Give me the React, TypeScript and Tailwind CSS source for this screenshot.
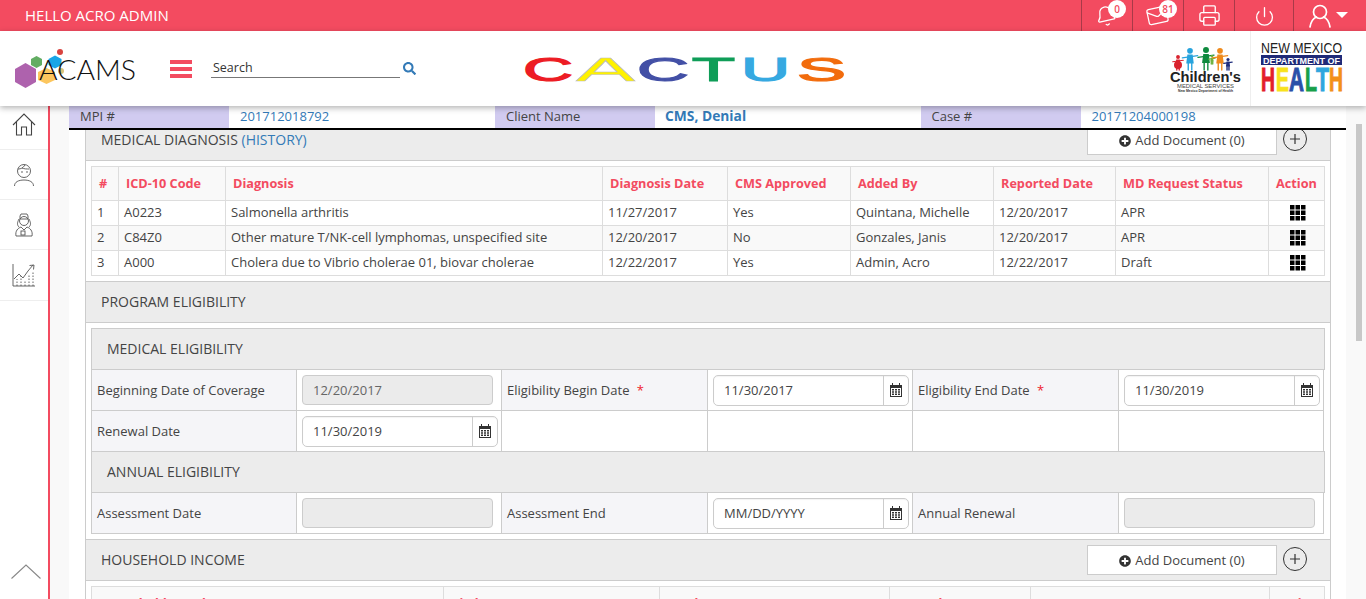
import { Bell, Mail, Printer, Power } from 'lucide-react'
import { FaSearch, FaPlusCircle } from 'react-icons/fa'

const MPI_CELLS = [
  { label: 'MPI #', value: '201712018792', w: 'w-[426px]' },
  { label: 'Client Name', value: 'CMS, Denial', bold: true, w: 'w-[425.5px]' },
  { label: 'Case #', value: '20171204000198', w: 'flex-1' },
]

const DIAGNOSIS_COLS = [
  { name: '#', w: 'w-[27px]' },
  { name: 'ICD-10 Code', w: 'w-[107px]' },
  { name: 'Diagnosis', w: 'w-[377px]' },
  { name: 'Diagnosis Date', w: 'w-[125px]' },
  { name: 'CMS Approved', w: 'w-[123px]' },
  { name: 'Added By', w: 'w-[143px]' },
  { name: 'Reported Date', w: 'w-[122px]' },
  { name: 'MD Request Status', w: 'w-[153px]' },
  { name: 'Action', w: 'w-[56px]' },
]

const DIAGNOSES = [
  ['1', 'A0223', 'Salmonella arthritis', '11/27/2017', 'Yes', 'Quintana, Michelle', '12/20/2017', 'APR'],
  ['2', 'C84Z0', 'Other mature T/NK-cell lymphomas, unspecified site', '12/20/2017', 'No', 'Gonzales, Janis', '12/20/2017', 'APR'],
  ['3', 'A000', 'Cholera due to Vibrio cholerae 01, biovar cholerae', '12/22/2017', 'Yes', 'Admin, Acro', '12/22/2017', 'Draft'],
]

const INCOME_COLS = [
  { name: 'Household Member Name', w: 'w-[352px]' },
  { name: 'Birth Date', w: 'w-[216px]' },
  { name: 'Employer Type', w: 'w-[230px]' },
  { name: 'Annual Income', w: 'w-[141px]' },
  { name: 'Income Frequency', w: 'w-[239px]' },
  { name: 'Action', w: 'w-[55px]' },
]

function AcamsLogo() {
  return (
    <svg width="124" height="50" viewBox="0 0 124 50">
      <polygon points="11.5,21 22,27 22,40 11.5,46 1,40 1,27" fill="#ae62ad" />
      <polygon points="22.5,14 28,17 28,23 22.5,26 17,23 17,17" fill="#63ad63" />
      <polygon points="41,13.5 47.5,17 47.5,23 41,26.5 34.5,23 34.5,17" fill="#19a5e6" />
      <polygon points="32.5,26 41,30 41,38 32.5,42 24,38 24,30" fill="#fcc65e" />
      <circle cx="46" cy="10" r="3" fill="#d8433f" />
      <circle cx="47" cy="29" r="3" fill="#d9c27a" />
      <text x="25" y="38" fontFamily="Lato, 'Liberation Sans', sans-serif" fontWeight="300" fontSize="28" fill="#111" textLength="97" lengthAdjust="spacingAndGlyphs">ACAMS</text>
    </svg>
  )
}

function CactusLogo() {
  const letters = [
    { c: 'C', x: 0, w: 50, fill: '#ed1c24' },
    { c: 'A', x: 53, w: 59, fill: '#fff200' },
    { c: 'C', x: 114, w: 52, fill: '#4350a6' },
    { c: 'T', x: 169, w: 43, fill: '#0f9d58' },
    { c: 'U', x: 218, w: 49, fill: '#36a9e1' },
    { c: 'S', x: 274, w: 49, fill: '#f26c0d' },
  ]
  return (
    <svg width="324" height="26" viewBox="0 0 324 26">
      {letters.map((l, i) => (
        <text
          key={i}
          x={l.x}
          y="24.5"
          fontFamily="'Liberation Sans', sans-serif"
          fontSize="33"
          fill={l.fill}
          stroke={l.c === 'A' ? '#bbb' : l.fill}
          strokeWidth={l.c === 'A' ? 0.5 : 1.2}
          textLength={l.w}
          lengthAdjust="spacingAndGlyphs"
        >
          {l.c}
        </text>
      ))}
    </svg>
  )
}

function Kid({ x, y, h, color }: { x: number; y: number; h: number; color: string }) {
  return (
    <g stroke={color} fill={color} strokeLinecap="round">
      <circle cx={x} cy={y + h * 0.13} r={h * 0.13} stroke="none" />
      <polygon points={`${x - h * 0.12},${y + h * 0.3} ${x + h * 0.12},${y + h * 0.3} ${x + h * 0.17},${y + h * 0.7} ${x - h * 0.17},${y + h * 0.7}`} stroke="none" />
      <line x1={x - h * 0.08} y1={y + h * 0.65} x2={x - h * 0.08} y2={y + h} strokeWidth="1.4" />
      <line x1={x + h * 0.08} y1={y + h * 0.65} x2={x + h * 0.08} y2={y + h} strokeWidth="1.4" />
      <line x1={x - h * 0.35} y1={y + h * 0.45} x2={x + h * 0.35} y2={y + h * 0.35} strokeWidth="1.2" />
    </g>
  )
}

function ChildrensLogo() {
  return (
    <svg width="72" height="46" viewBox="0 0 72 46">
      <circle cx="8" cy="18" r="4" fill="#d9232e" />
      <Kid x={8} y={8} h={15} color="#d9232e" />
      <Kid x={20} y={1} h={22} color="#27a3dd" />
      <Kid x={36} y={0} h={23} color="#0e8a3e" />
      <Kid x={42} y={8} h={9} color="#6fb23f" />
      <Kid x={50} y={1} h={22} color="#ef8a1c" />
      <Kid x={58} y={11} h={12} color="#1e2d7d" />
      <text x="0" y="35" fontFamily="'Liberation Sans', sans-serif" fontWeight="700" fontSize="15" fill="#222" textLength="71" lengthAdjust="spacingAndGlyphs">Children's</text>
      <text x="7" y="41" fontFamily="'Liberation Sans', sans-serif" fontSize="6" fill="#444" textLength="57" lengthAdjust="spacingAndGlyphs">MEDICAL SERVICES</text>
      <text x="8" y="45" fontFamily="'Liberation Sans', sans-serif" fontWeight="700" fontSize="3.5" fill="#333" textLength="55" lengthAdjust="spacingAndGlyphs">New Mexico Department of Health</text>
    </svg>
  )
}

function HealthLogo() {
  const letters = [
    { c: 'H', x: 0, w: 14, fill: '#e3202a' },
    { c: 'E', x: 15, w: 13, fill: '#f8e21c' },
    { c: 'A', x: 28, w: 15, fill: '#2a4fa8' },
    { c: 'L', x: 44, w: 12, fill: '#17a04a' },
    { c: 'T', x: 55, w: 13, fill: '#2fa6de' },
    { c: 'H', x: 68, w: 14, fill: '#f39019' },
  ]
  return (
    <svg width="82" height="52" viewBox="0 0 82 52">
      <text x="0" y="13" fontFamily="'Liberation Sans', sans-serif" fontSize="15.5" fill="#222" textLength="81" lengthAdjust="spacingAndGlyphs">NEW MEXICO</text>
      <rect x="0" y="15" width="81" height="10" fill="#1f2a78" />
      <text x="2" y="23.5" fontFamily="'Liberation Sans', sans-serif" fontWeight="700" fontSize="9.5" fill="#fff" textLength="77" lengthAdjust="spacingAndGlyphs">DEPARTMENT OF</text>
      {letters.map((l, i) => (
        <text key={i} x={l.x} y="50.500" fontFamily="'Liberation Sans', sans-serif" fontWeight="700" fontSize="33" fill={l.fill} stroke={l.fill} strokeWidth="1" textLength={l.w} lengthAdjust="spacingAndGlyphs">
          {l.c}
        </text>
      ))}
    </svg>
  )
}

function UserOutline() {
  return (
    <svg width="22" height="24" viewBox="0 0 22 24" fill="none" stroke="#fff" strokeWidth="1.7">
      <circle cx="11" cy="8" r="6.5" />
      <path d="M1 23c1-6 4-9 6.5-10M21 23c-1-6-4-9-6.5-10" strokeLinecap="round" />
    </svg>
  )
}

function Badge({ n }: { n: number }) {
  return (
    <span className="absolute left-[26px] top-[0px] w-[18px] h-[18px] rounded-full bg-white text-[#f34b60] text-[10px] leading-[18px] font-semibold text-center">
      {n}
    </span>
  )
}

function TopBar() {
  return (
    <div className="h-[31px] bg-[#f34b60] flex items-stretch text-white shrink-0">
      <div className="pl-[25px] text-[15px] leading-[31px] flex-1">HELLO ACRO ADMIN</div>
      <div className="relative w-[51px] border-l border-[#a83a48] flex items-center justify-center">
        <Bell size={22} strokeWidth={1.4} className="-rotate-12 -ml-[2px]" />
        <Badge n={0} />
      </div>
      <div className="relative w-[51px] border-l border-[#a83a48] flex items-center justify-center">
        <Mail size={23} strokeWidth={1.3} className="-rotate-12 -ml-[2px]" />
        <Badge n={81} />
      </div>
      <div className="w-[51px] border-l border-[#a83a48] flex items-center justify-center">
        <Printer size={23} strokeWidth={1.4} />
      </div>
      <div className="w-[59px] border-l border-[#a83a48] flex items-center justify-center">
        <Power size={21} strokeWidth={1.5} className="ml-[1px] mt-[2px]" />
      </div>
      <div className="w-[73px] border-l border-[#a83a48] flex items-center pl-[15px] gap-[5px]">
        <UserOutline />
        <svg width="12" height="6" viewBox="0 0 12 6" fill="#fff" className="-mt-[1px]">
          <path d="M0 0h12L6 6z" />
        </svg>
      </div>
    </div>
  )
}

function MainHeader() {
  return (
    <div className="relative z-10 h-[75px] bg-white flex items-center shadow-[0_2px_6px_rgba(0,0,0,0.3)] shrink-0">
      <div className="ml-[14px] -mt-[3px] w-[124px]">
        <AcamsLogo />
      </div>
      <div className="ml-[32px] mt-[1px] flex flex-col gap-[3px] w-[22px]">
        <span className="h-1 bg-[#f34b60]" />
        <span className="h-1 bg-[#f34b60]" />
        <span className="h-1 bg-[#f34b60]" />
      </div>
      <div className="ml-[19px] w-[189px] h-[19px] -mt-[1px] border-b border-[#777] pl-[2px] text-[12.5px] leading-[18px] text-[#333]">Search</div>
      <FaSearch size={13} className="ml-[3px] text-[#337ab7]" />
      <div className="ml-[107px] mt-[1px] w-[324px] h-[26px]">
        <CactusLogo />
      </div>
      <div className="ml-[323px] mt-[2px] w-[72px] h-[46px]">
        <ChildrensLogo />
      </div>
      <div className="ml-[8px] h-full border-l border-[#eee] pl-[10px] pt-[9px]">
        <HealthLogo />
      </div>
    </div>
  )
}

function HomeIcon() {
  return (
    <svg width="24" height="23" viewBox="0 0 24 23" fill="none" stroke="#444" strokeWidth="1.1">
      <path d="M1 12L12 1l11 11" />
      <path d="M4.500 9v13h5v-8h5v8h5V9" />
    </svg>
  )
}

function FaceIcon() {
  return (
    <svg width="22" height="24" viewBox="0 0 22 24" fill="none" stroke="#555" strokeWidth="0.9">
      <circle cx="11" cy="8" r="6.5" />
      <path d="M5 6c3 0 5-1 7-4M9 5c2 1 5 1 7 1" />
      <circle cx="9" cy="9" r="0.4" />
      <circle cx="14" cy="9" r="0.4" />
      <path d="M1.5 23c0-4 4-6 9.500-6s9.500 2 9.500 6" />
    </svg>
  )
}

function NurseIcon() {
  return (
    <svg width="18" height="24" viewBox="0 0 18 24" fill="none" stroke="#555" strokeWidth="0.9">
      <path d="M5 3l1-2h6l1 2v3H5z" />
      <circle cx="9" cy="8" r="4.500" />
      <path d="M4 6c-2 4-2 6 0 8M14 6c2 4 2 6 0 8" />
      <path d="M1 23c-1-5 2-8 5-9l3 3 3-3c3 1 6 4 5 9z" />
      <rect x="6" y="18" width="4" height="4" />
    </svg>
  )
}

function ChartIcon() {
  return (
    <svg width="24" height="24" viewBox="0 0 24 24" fill="none" stroke="#555" strokeWidth="0.9">
      <path d="M1 1v22h22" />
      <path d="M5 23v-7M9 23v-10M13 23v-6M17 23v-11M21 23v-15" strokeDasharray="1.500 1.500" />
      <path d="M2 16l5-5 4 4 5-7 5-6M17.500 2.500L22 2l-.5 4.500" />
    </svg>
  )
}

function Sidebar() {
  return (
    <div className="w-[50px] shrink-0 bg-white border-r-2 border-[#f34b60] flex flex-col">
      <div className="h-[44px] border-b border-[#eee] flex items-center justify-center pb-[6px]">
        <HomeIcon />
      </div>
      <div className="h-[50px] border-b border-[#eee] flex items-center justify-center">
        <FaceIcon />
      </div>
      <div className="h-[50px] border-b border-[#eee] flex items-center justify-center">
        <NurseIcon />
      </div>
      <div className="h-[51px] border-b border-[#eee] flex items-center justify-center">
        <ChartIcon />
      </div>
      <div className="mt-auto pb-[20px] pl-[4px] flex justify-center">
        <svg width="30" height="15" viewBox="0 0 30 15" fill="none" stroke="#888" strokeWidth="1.1">
          <path d="M0.500 14.500L15 1l14.500 13.500" />
        </svg>
      </div>
    </div>
  )
}

function GridIcon() {
  return (
    <svg width="16" height="16" viewBox="0 0 16 16" fill="#000" className="ml-[21px]">
      {[0, 5.500, 11].map(y =>
        [0, 5.500, 11].map(x => <rect key={`${x}-${y}`} x={x} y={y} width="4.500" height="4.500" />)
      )}
    </svg>
  )
}

function CalendarIcon() {
  return (
    <svg width="12" height="14" viewBox="0 0 12 14" fill="#333">
      <path d="M0 2h2V0h1v2h6V0h1v2h2v12H0zM1 5v8h10V5z" />
      <path d="M2 6h2v1.500H2zM5 6h2v1.500H5zM8 6h2v1.500H8zM2 8.300h2v1.500H2zM5 8.300h2v1.500H5zM8 8.300h2v1.500H8zM2 10.600h2v1.500H2zM5 10.600h2v1.500H5zM8 10.600h2v1.500H8z" />
    </svg>
  )
}

function DateInput({ value }: { value: string }) {
  return (
    <div className="h-[31px] flex border border-[#ccc] rounded-[5px] bg-white text-[13px] text-[#444] shadow-[inset_0_1px_1px_rgba(0,0,0,0.05)]">
      <div className="flex-1 pl-[10px] leading-[29px]">{value}</div>
      <div className="w-[25px] border-l border-[#ccc] flex items-center justify-center">
        <CalendarIcon />
      </div>
    </div>
  )
}

function DisabledInput({ value }: { value?: string }) {
  return (
    <div className="h-[30px] w-[191px] border border-[#ccc] rounded-[4px] bg-[#ebebeb] pl-[10px] text-[13px] leading-[28px] text-[#666]">
      {value}
    </div>
  )
}

function AddDocument() {
  return (
    <div className="flex items-center">
      <button className="w-[190px] h-[30px] pt-px bg-white border border-[#ccc] flex items-center justify-center gap-[4px] text-[13px] text-[#444]">
        <FaPlusCircle size={12} className="text-[#333]" />
        Add Document (0)
      </button>
      <span className="w-[24px] h-[24px] ml-[6px] mr-[23px] -mt-[3px] rounded-full border-[1.5px] border-[#333] flex items-center justify-center">
        <svg width="12" height="12" viewBox="0 0 12 12" stroke="#333" strokeWidth="1.2">
          <path d="M6 1v10M1 6h10" />
        </svg>
      </span>
    </div>
  )
}

function Band({ children, action }: { children: React.ReactNode; action?: boolean }) {
  return (
    <div className="h-[41px] bg-[#ececec] border border-[#ccc] border-t-0 flex items-center justify-between pl-[15px] text-[14px] text-[#444]">
      <div className="pb-[2px]">{children}</div>
      {action && <AddDocument />}
    </div>
  )
}

function SubBand({ children, first }: { children: React.ReactNode; first?: boolean }) {
  return (
    <div className={first
      ? 'h-[42px] w-[1234px] bg-[#ececec] border border-[#ccc] flex items-center pl-[15px] pb-px text-[14px] text-[#444]'
      : '-mt-px h-[42px] w-[1234px] bg-[#ececec] border border-[#ccc] flex items-center pl-[15px] pb-px text-[14px] text-[#444]'}>
      {children}
    </div>
  )
}

function DiagnosisTable() {
  return (
    <table className="w-[1233px] table-fixed border-collapse border border-[#ddd] text-[13px] text-[#444]">
      <thead>
        <tr className="h-[34px] bg-[#f9f9f9]">
          {DIAGNOSIS_COLS.map(c => (
            <th key={c.name} className={`${c.w} border border-[#ddd] px-[7px] text-left text-[12.7px] font-bold text-[#f34b60] whitespace-nowrap`}>{c.name}</th>
          ))}
        </tr>
      </thead>
      <tbody>
        {DIAGNOSES.map((row, i) => (
          <tr key={row[0]} className={i === 1 ? 'h-[25px] bg-[#f9f9f9]' : 'h-[25px] bg-white'}>
            {row.map((cell, j) => (
              <td key={j} className="border border-[#ddd] px-[5px] whitespace-nowrap">{cell}</td>
            ))}
            <td className="border border-[#ddd]"><GridIcon /></td>
          </tr>
        ))}
      </tbody>
    </table>
  )
}

const labelCell = 'h-[41px] border border-[#ccc] bg-[#f5f5f8] px-[5px] pt-[1px] text-[13px] text-[#444] whitespace-nowrap'
const valueCell = 'h-[41px] border border-[#ccc] bg-white pl-[5px] pr-[3px]'

function Req() {
  return <span className="text-[#f01c2c] ml-[4px]">*</span>
}

function EligCols() {
  return (
    <colgroup>
      <col className="w-[205px]" />
      <col className="w-[205px]" />
      <col className="w-[206px]" />
      <col className="w-[205px]" />
      <col className="w-[206px]" />
      <col className="w-[205px]" />
    </colgroup>
  )
}

function EligibilityRows() {
  return (
    <table className="-mt-px w-[1232px] table-fixed border-collapse">
      <EligCols />
      <tbody>
        <tr>
          <td className={labelCell}>Beginning Date of Coverage</td>
          <td className={valueCell}><DisabledInput value="12/20/2017" /></td>
          <td className={labelCell}>Eligibility Begin Date <Req /></td>
          <td className={valueCell}><DateInput value="11/30/2017" /></td>
          <td className={labelCell}>Eligibility End Date <Req /></td>
          <td className={valueCell}><DateInput value="11/30/2019" /></td>
        </tr>
        <tr>
          <td className={labelCell}>Renewal Date</td>
          <td className={valueCell}><DateInput value="11/30/2019" /></td>
          <td className={valueCell} />
          <td className={valueCell} />
          <td className={valueCell} />
          <td className={valueCell} />
        </tr>
      </tbody>
    </table>
  )
}

function AnnualRow() {
  return (
    <table className="-mt-px w-[1232px] table-fixed border-collapse">
      <EligCols />
      <tbody>
        <tr>
          <td className={labelCell}>Assessment Date</td>
          <td className={valueCell}><DisabledInput /></td>
          <td className={labelCell}>Assessment End</td>
          <td className={valueCell}><DateInput value="MM/DD/YYYY" /></td>
          <td className={labelCell}>Annual Renewal</td>
          <td className={valueCell}><DisabledInput /></td>
        </tr>
      </tbody>
    </table>
  )
}

function IncomeTable() {
  return (
    <table className="w-[1233px] table-fixed border-collapse border border-[#ddd] text-[13px]">
      <thead>
        <tr className="h-[34px] bg-[#f9f9f9]">
          {INCOME_COLS.map(c => (
            <th key={c.name} className={`${c.w} border border-[#ddd] px-[7px] pt-[1px] text-left text-[12.7px] font-bold text-[#f34b60] whitespace-nowrap`}>{c.name}</th>
          ))}
        </tr>
      </thead>
    </table>
  )
}

export default function App() {
  return (
    <div className="h-[599px] overflow-hidden flex flex-col bg-[#f9f9f9] font-['Open_Sans',sans-serif]">
      <TopBar />
      <MainHeader />
      <div className="flex flex-1 min-h-0">
        <Sidebar />
        <div className="w-[19px] shrink-0" />
        <div className="w-[1277px] shrink-0 bg-white flex flex-col min-h-0">
          {/* patient strip */}
          <div className="h-[24px] shrink-0 flex border-b-2 border-black text-[13px] leading-[21px]">
            {MPI_CELLS.map(c => (
              <div key={c.label} className={`${c.w} flex`}>
                <div className="w-[160px] bg-[#d1cbf0] pl-[11px] text-[#444]">{c.label}</div>
                <div className={c.bold ? 'pl-[10px] text-[13.8px] leading-[20px] text-[#337ab7] font-bold' : 'pl-[11px] text-[#337ab7]'}>{c.value}</div>
              </div>
            ))}
          </div>

          <div className="flex-1 min-h-0 overflow-hidden pl-4 pr-[15px]">
            <div className="-mt-[10px]">
              <Band action>
                MEDICAL DIAGNOSIS <span className="text-[#337ab7]">(HISTORY)</span>
              </Band>
              <div className="border-x border-[#ccc] px-[5px] py-[5px]">
                <DiagnosisTable />
              </div>
              <div className="border-t border-[#ccc]" />
              <Band>PROGRAM ELIGIBILITY</Band>
              <div className="border-x border-b border-[#ccc] px-[5px] py-[5px]">
                <SubBand first>MEDICAL ELIGIBILITY</SubBand>
                <EligibilityRows />
                <SubBand>ANNUAL ELIGIBILITY</SubBand>
                <AnnualRow />
              </div>
              <Band action>HOUSEHOLD INCOME</Band>
              <div className="border-x border-[#ccc] px-[5px] py-[5px]">
                <IncomeTable />
              </div>
            </div>
          </div>
        </div>

        {/* page scrollbar */}
        <div className="flex-1 pl-[10px] pt-[18px]">
          <div className="w-[6px] h-[217px] bg-[#c8c8c8]" />
        </div>
      </div>
    </div>
  )
}
